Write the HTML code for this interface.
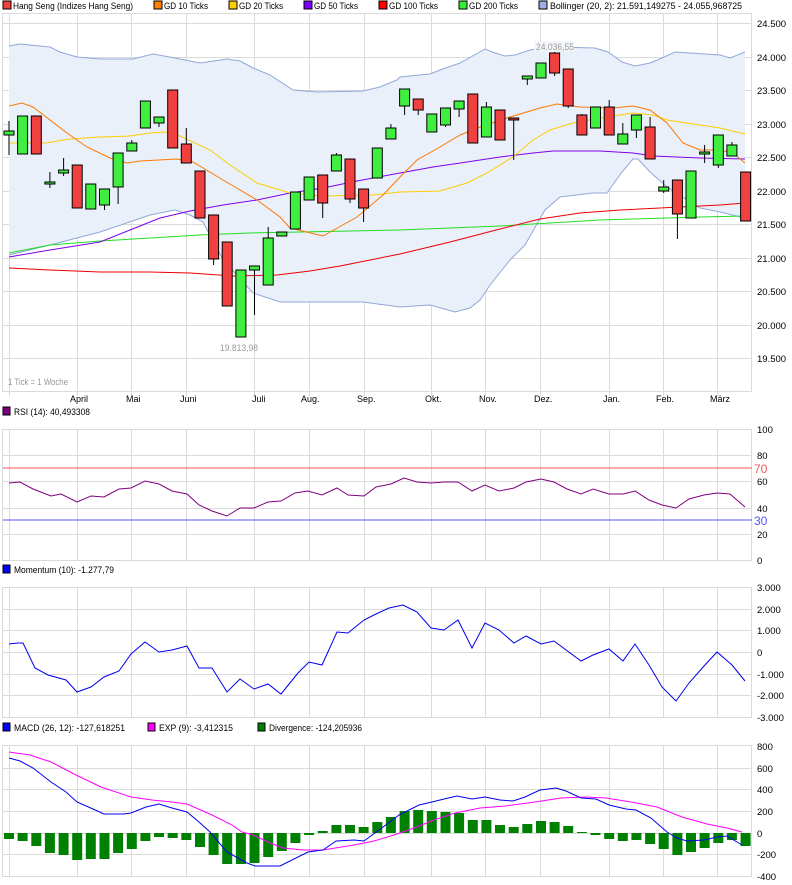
<!DOCTYPE html>
<html><head><meta charset="utf-8"><style>
html,body{margin:0;padding:0;background:#fff;}
svg{display:block;font-family:"Liberation Sans",sans-serif;font-size:10px;}
</style></head><body>
<svg width="792" height="885" viewBox="0 0 792 885" xmlns="http://www.w3.org/2000/svg">
<!-- legend -->
<g font-size="9.5">
<rect x="3" y="1" width="8" height="8" fill="#F04040" stroke="#000" stroke-width="1"/><text x="13" y="9" textLength="120" lengthAdjust="spacingAndGlyphs">Hang Seng (Indizes Hang Seng)</text>
<rect x="154" y="1" width="8" height="8" fill="#FF7F00" stroke="#000"/><text x="164" y="9" textLength="44" lengthAdjust="spacingAndGlyphs">GD 10 Ticks</text>
<rect x="229" y="1" width="8" height="8" fill="#FFCC00" stroke="#000"/><text x="239" y="9" textLength="44" lengthAdjust="spacingAndGlyphs">GD 20 Ticks</text>
<rect x="304" y="1" width="8" height="8" fill="#7F00FF" stroke="#000"/><text x="314" y="9" textLength="44" lengthAdjust="spacingAndGlyphs">GD 50 Ticks</text>
<rect x="379" y="1" width="8" height="8" fill="#FF0000" stroke="#000"/><text x="389" y="9" textLength="49" lengthAdjust="spacingAndGlyphs">GD 100 Ticks</text>
<rect x="459" y="1" width="8" height="8" fill="#33EE33" stroke="#000"/><text x="469" y="9" textLength="49" lengthAdjust="spacingAndGlyphs">GD 200 Ticks</text>
<rect x="539" y="1" width="8" height="8" fill="#9DB0E0" stroke="#000"/><text x="550" y="9" textLength="192" lengthAdjust="spacingAndGlyphs">Bollinger (20, 2): 21.591,149275 - 24.055,968725</text>
</g>
<!-- Main panel grid -->
<g stroke="#DADADA" stroke-width="1" shape-rendering="crispEdges" fill="none">
<rect x="2.5" y="13.5" width="749" height="378"/>
<path d="M3 23.5H752M3 57.5H752M3 90.5H752M3 124.5H752M3 157.5H752M3 191.5H752M3 224.5H752M3 258.5H752M3 291.5H752M3 325.5H752M3 358.5H752"/>
<path d="M9.5 14V396M77.5 14V396M131.5 14V396M186.5 14V396M254.5 14V396M309.5 14V396M364.5 14V396M431.5 14V396M485.5 14V396M540.5 14V396M609.5 14V396M663.5 14V396M717.5 14V396"/>
</g>
<!-- bollinger fill -->
<polygon fill="#EAF0FA" points="9,46 20,44 30,45 50,47 60,52 77,57 100,59 133,59 153,54 175,58 200,63 227,59 240,61 253,68 270,75 293,90 317,92 363,91 380,87 397,80 400,77 430,74 440,70 460,63 485,49 495,53 505,56 515,55 530,50 553,47 595,48 608,52 622,62 635,66 650,63 662,58 675,52 690,53 720,55 730,58 745,52 745,218 720,212 700,208 687,200 667,187 650,172 638,159 633,159 622,172 607,193 593,193 560,197 545,210 525,245 510,260 490,285 480,300 470,308 455,312 430,305 400,307 363,302 280,302 253,293 223,260 203,222 190,215 175,210 150,215 100,232 50,245 9,255"/>
<g fill="none" stroke-width="1">
<polyline stroke="#90A8D8" points="9,46 20,44 30,45 50,47 60,52 77,57 100,59 133,59 153,54 175,58 200,63 227,59 240,61 253,68 270,75 293,90 317,92 363,91 380,87 397,80 400,77 430,74 440,70 460,63 485,49 495,53 505,56 515,55 530,50 553,47 595,48 608,52 622,62 635,66 650,63 662,58 675,52 690,53 720,55 730,58 745,52"/>
<polyline stroke="#90A8D8" points="745,218 720,212 700,208 687,200 667,187 650,172 638,159 633,159 622,172 607,193 593,193 560,197 545,210 525,245 510,260 490,285 480,300 470,308 455,312 430,305 400,307 363,302 280,302 253,293 223,260 203,222 190,215 175,210 150,215 100,232 50,245 9,255"/>
<polyline stroke="#22DD22" points="9,253 50,245 100,241 150,238 200,235 250,233 300,232 400,230 500,226 600,220 700,217 745,216"/>
<polyline stroke="#EE0000" points="9,268 50,270 100,272 150,272 190,273 233,276 277,275 310,271 340,266 370,260 400,254 450,242 500,229 540,219 580,213 620,210 680,207 720,205 745,203"/>
<polyline stroke="#7F00EE" points="9,257 50,250 100,242 130,230 160,218 190,211 223,205 257,200 290,193 323,188 357,181 400,173 433,167 467,162 500,157 533,153 553,151 600,151 633,153 653,156 700,158 745,159"/>
<polyline stroke="#FFCC00" points="9,143 45,143 70,139 100,137 130,136 150,133 165,132 180,136 210,150 230,165 257,183 290,193 323,196 373,195 400,192 440,191 467,183 487,173 513,157 533,140 550,130 573,123 600,118 633,113 653,115 667,120 700,125 720,128 745,134"/>
<polyline stroke="#FF7700" points="9,106 22,103 33,107 67,133 87,147 110,158 127,163 140,161 177,159 193,162 223,180 257,200 280,217 290,228 323,236 357,217 383,195 400,177 417,160 440,147 460,135 480,127 510,117 540,108 557,104 580,107 613,108 633,106 650,110 667,123 683,143 700,150 720,150 733,153 745,163"/>
</g>
<!-- candles -->
<g stroke="#000" stroke-width="1">
<path d="M9 121V155M22.6 116V154M36.3 116V154M49.9 172V188M63.6 158V176M77.2 165V208M90.8 184V209M104.5 189V210M118.1 153V204M131.8 140V151M145.4 101V128M159 117V127M172.7 90V148M186.3 128V163M200 171V218M213.6 215V265M227.2 242V306M240.9 270V337M254.5 266V315M268.2 227V285M281.8 232V236M295.4 192V229M309.1 177V200M322.7 175V218M336.4 153V171M350 159V203M363.6 189V222M377.3 148V178M390.9 124V139M404.6 89V115M418.2 99V115M431.8 114V132M445.5 108V127M459.1 101V117M472.8 94V143M486.4 102V137M500 110V140M513.7 118V160M527.3 76V85M541 63V78M554.6 52V76M568.2 69V108M581.9 114V135M595.5 107V128M609.2 100V135M622.8 123V144M636.4 115V138M650.1 117V159M663.7 180V193M677.4 180V239M691 171V218M704.6 145V163M718.3 135V168M731.9 142V156M745.6 172V221"/>
<g fill="#40EE40">
<rect x="4" y="131" width="10" height="4"/><rect x="17.6" y="116" width="10" height="38"/><rect x="44.9" y="182" width="10" height="2"/><rect x="58.6" y="170" width="10" height="3"/><rect x="85.8" y="184" width="10" height="25"/><rect x="99.5" y="189" width="10" height="16"/><rect x="113.1" y="153" width="10" height="34"/><rect x="126.8" y="143" width="10" height="8"/><rect x="140.4" y="101" width="10" height="27"/><rect x="154" y="117" width="10" height="6"/><rect x="235.9" y="270" width="10" height="67"/><rect x="249.5" y="266" width="10" height="4"/><rect x="263.2" y="238" width="10" height="47"/><rect x="276.8" y="232" width="10" height="4"/><rect x="290.4" y="192" width="10" height="37"/><rect x="304.1" y="177" width="10" height="23"/><rect x="331.4" y="155" width="10" height="16"/><rect x="372.3" y="148" width="10" height="30"/><rect x="385.9" y="128" width="10" height="11"/><rect x="399.6" y="89" width="10" height="17"/><rect x="426.8" y="114" width="10" height="18"/><rect x="440.5" y="108" width="10" height="17"/><rect x="454.1" y="101" width="10" height="8"/><rect x="481.4" y="107" width="10" height="30"/><rect x="522.3" y="76" width="10" height="3"/><rect x="536" y="63" width="10" height="15"/><rect x="590.5" y="107" width="10" height="21"/><rect x="617.8" y="134" width="10" height="10"/><rect x="631.4" y="115" width="10" height="15"/><rect x="658.7" y="187" width="10" height="4"/><rect x="686" y="171" width="10" height="47"/><rect x="699.6" y="152" width="10" height="2"/><rect x="713.3" y="135" width="10" height="30"/><rect x="726.9" y="145" width="10" height="11"/>
</g>
<g fill="#F04040">
<rect x="31.3" y="116" width="10" height="38"/><rect x="72.2" y="165" width="10" height="43"/><rect x="167.7" y="90" width="10" height="58"/><rect x="181.3" y="144" width="10" height="19"/><rect x="195" y="171" width="10" height="47"/><rect x="208.6" y="215" width="10" height="44"/><rect x="222.2" y="242" width="10" height="64"/><rect x="317.7" y="175" width="10" height="28"/><rect x="345" y="159" width="10" height="40"/><rect x="358.6" y="189" width="10" height="19"/><rect x="413.2" y="99" width="10" height="11"/><rect x="467.8" y="94" width="10" height="49"/><rect x="495" y="110" width="10" height="30"/><rect x="508.7" y="118" width="10" height="2"/><rect x="549.6" y="53" width="10" height="20"/><rect x="563.2" y="69" width="10" height="37"/><rect x="576.9" y="115" width="10" height="20"/><rect x="604.2" y="107" width="10" height="28"/><rect x="645.1" y="127" width="10" height="32"/><rect x="672.4" y="180" width="10" height="34"/><rect x="740.6" y="172" width="10" height="49"/>
</g>
</g>
<!-- main labels -->
<rect x="534" y="41" width="40" height="10" fill="#F4F6FA"/>
<text x="536" y="50" fill="#999" font-size="9.5" textLength="38" lengthAdjust="spacingAndGlyphs">24.036,55</text>
<text x="220" y="351" fill="#999" font-size="9.5" textLength="38" lengthAdjust="spacingAndGlyphs">19.813,98</text>
<text x="8" y="385" fill="#999" font-size="9.5" textLength="60" lengthAdjust="spacingAndGlyphs">1 Tick = 1 Woche</text>
<g fill="#000" font-size="9.5">
<text x="757" y="27">24.500</text><text x="757" y="61">24.000</text><text x="757" y="94">23.500</text><text x="757" y="128">23.000</text><text x="757" y="161">22.500</text><text x="757" y="195">22.000</text><text x="757" y="228">21.500</text><text x="757" y="262">21.000</text><text x="757" y="295">20.500</text><text x="757" y="329">20.000</text><text x="757" y="362">19.500</text>
</g>
<g fill="#000" font-size="9">
<text x="70" y="402">April</text><text x="126" y="402">Mai</text><text x="180" y="402">Juni</text><text x="252" y="402">Juli</text><text x="301" y="402">Aug.</text><text x="357" y="402">Sep.</text><text x="425" y="402">Okt.</text><text x="479" y="402">Nov.</text><text x="534" y="402">Dez.</text><text x="603" y="402">Jan.</text><text x="656" y="402">Feb.</text><text x="710" y="402">März</text>
</g>
<!-- RSI -->
<rect x="3" y="407" width="7" height="8" fill="#800080" stroke="#000"/><text x="14" y="415" font-size="9.5" textLength="76" lengthAdjust="spacingAndGlyphs">RSI (14): 40,493308</text>
<g stroke="#DADADA" fill="none" shape-rendering="crispEdges">
<rect x="2.5" y="429.5" width="749" height="131"/>
<path d="M3 455.5H752M3 481.5H752M3 508.5H752M3 534.5H752"/>
<path d="M9.5 430V560M77.5 430V560M131.5 430V560M186.5 430V560M254.5 430V560M309.5 430V560M364.5 430V560M431.5 430V560M485.5 430V560M540.5 430V560M609.5 430V560M663.5 430V560M717.5 430V560"/>
</g>
<line x1="3" y1="468" x2="752" y2="468" stroke="#FF5555"/>
<line x1="3" y1="520" x2="752" y2="520" stroke="#5555FF"/>
<polyline fill="none" stroke="#800080" points="9,483 20,482 33,489 51,496 61,494 77,502 91,496 104,497 119,489 131,488 145,481 159,484 172,491 187,494 199,505 212,511 227,516 240,508 254,508 268,502 281,501 295,493 308,491 322,495 337,488 348,495 364,496 376,487 391,484 404,478 417,482 431,483 444,482 458,482 472,491 485,485 499,491 514,488 526,482 541,479 554,482 567,489 581,494 593,489 609,494 623,494 635,491 649,500 662,505 676,508 689,499 704,495 717,493 730,494 745,507"/>
<g fill="#000" font-size="9.5"><text x="757" y="433">100</text><text x="757" y="459">80</text><text x="757" y="485">60</text><text x="757" y="512">40</text><text x="757" y="538">20</text><text x="757" y="564">0</text></g>
<text x="754" y="473" fill="#FF5555" font-size="12">70</text>
<text x="754" y="525" fill="#5555FF" font-size="12">30</text>
<!-- Momentum -->
<rect x="3" y="565" width="7" height="8" fill="#0000FF" stroke="#000"/><text x="14" y="573" font-size="9.5" textLength="100" lengthAdjust="spacingAndGlyphs">Momentum (10): -1.277,79</text>
<g stroke="#DADADA" fill="none" shape-rendering="crispEdges">
<rect x="2.5" y="587.5" width="749" height="130"/>
<path d="M3 609.5H752M3 630.5H752M3 652.5H752M3 674.5H752M3 695.5H752"/>
<path d="M9.5 588V717M77.5 588V717M131.5 588V717M186.5 588V717M254.5 588V717M309.5 588V717M364.5 588V717M431.5 588V717M485.5 588V717M540.5 588V717M609.5 588V717M663.5 588V717M717.5 588V717"/>
</g>
<polyline fill="none" stroke="#0000EE" points="9,644 18,643 23,643 35,668 48,675 66,680 77,692 91,687 104,677 119,671 131,654 145,642 159,652 172,650 187,646 199,668 212,668 227,692 240,679 254,689 268,684 281,694 298,673 309,662 322,665 337,632 348,633 364,620 376,614 389,608 403,605 417,612 431,628 444,630 458,620 472,648 485,623 499,630 514,643 526,636 541,644 554,641 581,661 593,655 609,649 623,661 635,644 649,665 662,687 676,701 689,683 704,666 717,652 732,665 745,681"/>
<g fill="#000" font-size="9.5"><text x="757" y="591">3.000</text><text x="757" y="613">2.000</text><text x="757" y="634">1.000</text><text x="757" y="656">0</text><text x="757" y="678">-1.000</text><text x="757" y="699">-2.000</text><text x="757" y="721">-3.000</text></g>
<!-- MACD -->
<g font-size="9.5">
<rect x="3" y="723" width="7" height="8" fill="#0000FF" stroke="#000"/><text x="14" y="731" textLength="111" lengthAdjust="spacingAndGlyphs">MACD (26, 12): -127,618251</text>
<rect x="148" y="723" width="7" height="8" fill="#FF00FF" stroke="#000"/><text x="159" y="731" textLength="74" lengthAdjust="spacingAndGlyphs">EXP (9): -3,412315</text>
<rect x="258" y="723" width="7" height="8" fill="#008000" stroke="#000"/><text x="269" y="731" textLength="93" lengthAdjust="spacingAndGlyphs">Divergence: -124,205936</text>
</g>
<g stroke="#DADADA" fill="none" shape-rendering="crispEdges">
<rect x="2.5" y="745.5" width="749" height="131"/>
<path d="M3 768.5H752M3 789.5H752M3 811.5H752M3 833.5H752M3 854.5H752"/>
<path d="M9.5 746V876M77.5 746V876M131.5 746V876M186.5 746V876M254.5 746V876M309.5 746V876M364.5 746V876M431.5 746V876M485.5 746V876M540.5 746V876M609.5 746V876M663.5 746V876M717.5 746V876"/>
</g>
<g fill="#008000">
<rect x="4" y="833" width="10" height="6"/><rect x="17.6" y="833" width="10" height="8"/><rect x="31.3" y="833" width="10" height="13"/><rect x="44.9" y="833" width="10" height="20"/><rect x="58.6" y="833" width="10" height="22"/><rect x="72.2" y="833" width="10" height="27"/><rect x="85.8" y="833" width="10" height="26"/><rect x="99.5" y="833" width="10" height="26"/><rect x="113.1" y="833" width="10" height="20"/><rect x="126.8" y="833" width="10" height="16"/><rect x="140.4" y="833" width="10" height="8"/><rect x="154" y="833" width="10" height="4"/><rect x="167.7" y="833" width="10" height="5"/><rect x="181.3" y="833" width="10" height="7"/><rect x="195" y="833" width="10" height="14"/><rect x="208.6" y="833" width="10" height="22"/><rect x="222.2" y="833" width="10" height="31"/><rect x="235.9" y="833" width="10" height="31"/><rect x="249.5" y="833" width="10" height="30"/><rect x="263.2" y="833" width="10" height="24"/><rect x="276.8" y="833" width="10" height="18"/><rect x="290.4" y="833" width="10" height="10"/><rect x="304.1" y="833" width="10" height="2"/><rect x="317.7" y="831" width="10" height="2"/><rect x="331.4" y="825" width="10" height="8"/><rect x="345" y="825" width="10" height="8"/><rect x="358.6" y="827" width="10" height="6"/><rect x="372.3" y="822" width="10" height="11"/><rect x="385.9" y="817" width="10" height="16"/><rect x="399.6" y="811" width="10" height="22"/><rect x="413.2" y="810" width="10" height="23"/><rect x="426.8" y="811" width="10" height="22"/><rect x="440.5" y="812" width="10" height="21"/><rect x="454.1" y="813" width="10" height="20"/><rect x="467.8" y="820" width="10" height="13"/><rect x="481.4" y="820" width="10" height="13"/><rect x="495" y="825" width="10" height="8"/><rect x="508.7" y="827" width="10" height="6"/><rect x="522.3" y="824" width="10" height="9"/><rect x="536" y="821" width="10" height="12"/><rect x="549.6" y="822" width="10" height="11"/><rect x="563.2" y="826" width="10" height="7"/><rect x="576.9" y="832" width="10" height="1"/><rect x="590.5" y="833" width="10" height="2"/><rect x="604.2" y="833" width="10" height="6"/><rect x="617.8" y="833" width="10" height="8"/><rect x="631.4" y="833" width="10" height="7"/><rect x="645.1" y="833" width="10" height="11"/><rect x="658.7" y="833" width="10" height="16"/><rect x="672.4" y="833" width="10" height="22"/><rect x="686" y="833" width="10" height="19"/><rect x="699.6" y="833" width="10" height="15"/><rect x="713.3" y="833" width="10" height="10"/><rect x="726.9" y="833" width="10" height="7"/><rect x="740.6" y="833" width="10" height="13"/>
</g>
<polyline fill="none" stroke="#FF00FF" points="9,752 30,755 51,762 76,775 101,787 131,797 152,800 172,802 187,804 212,815 232,825 242,832 253,835 268,842 283,848 303,850 323,850 354,845 374,841 394,835 414,828 434,820 455,813 480,808 505,806 535,802 561,798 586,797 606,798 631,802 657,807 682,817 707,824 727,828 742,832"/>
<polyline fill="none" stroke="#0000EE" points="9,758 20,761 33,768 51,782 66,792 77,802 93,809 104,814 124,814 131,813 146,807 159,804 172,808 187,812 199,822 210,832 227,852 247,863 255,866 280,866 308,852 323,850 336,841 354,840 364,841 379,830 399,815 419,805 432,802 444,799 457,796 472,799 485,797 500,800 513,801 525,797 540,790 556,788 566,791 581,798 596,799 609,805 626,809 636,810 651,818 667,832 677,838 687,841 704,840 717,837 727,836 742,845"/>
<g fill="#000" font-size="9.5"><text x="757" y="750">800</text><text x="757" y="772">600</text><text x="757" y="793">400</text><text x="757" y="815">200</text><text x="757" y="837">0</text><text x="757" y="858">-200</text><text x="757" y="880">-400</text></g>
</svg>
</body></html>
